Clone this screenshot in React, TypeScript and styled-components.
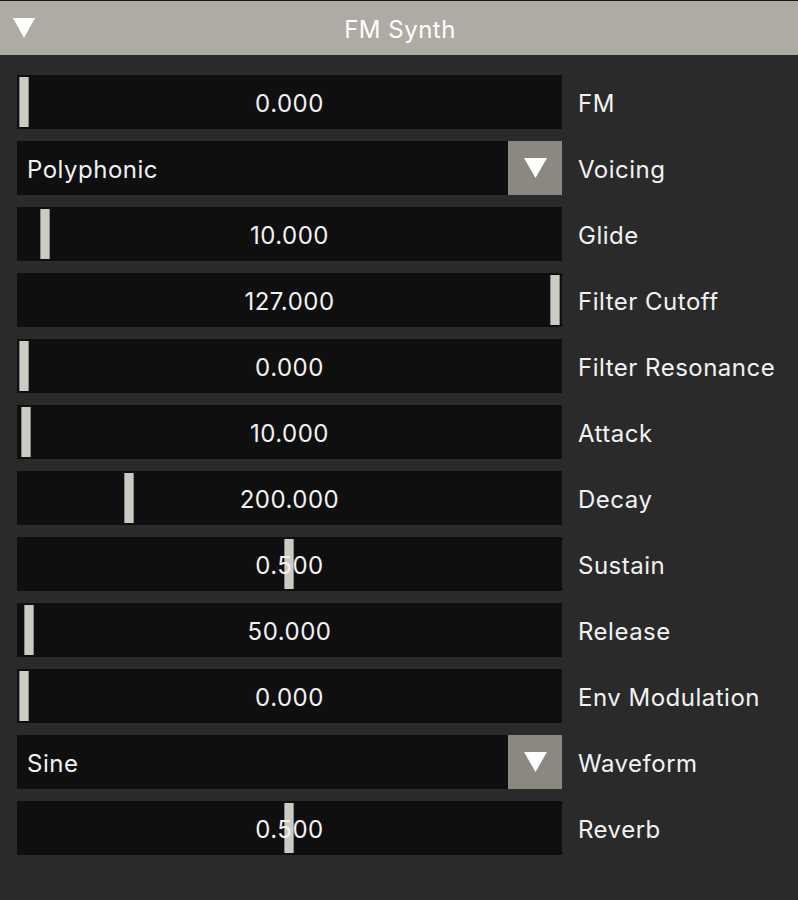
import React from "react";
import styled, { createGlobalStyle } from "styled-components";

const GlobalStyle = createGlobalStyle`
  html, body {
    margin: 0;
    padding: 0;
    background: #2a2a2a;
  }
  body {
    font-family: Inter, "Noto Sans", sans-serif;
    color: #f2f2f2;
  }
`;

type SliderRow = { kind: "slider"; label: string; value: string; pos: number };
type ComboRow = { kind: "combo"; label: string; value: string };
type Row = SliderRow | ComboRow;

// pos = grab offset in px from the left of the track (0..531)
const rows: Row[] = [
  { kind: "slider", label: "FM", value: "0.000", pos: 0 },
  { kind: "combo", label: "Voicing", value: "Polyphonic" },
  { kind: "slider", label: "Glide", value: "10.000", pos: 21 },
  { kind: "slider", label: "Filter Cutoff", value: "127.000", pos: 531 },
  { kind: "slider", label: "Filter Resonance", value: "0.000", pos: 0 },
  { kind: "slider", label: "Attack", value: "10.000", pos: 2 },
  { kind: "slider", label: "Decay", value: "200.000", pos: 105 },
  { kind: "slider", label: "Sustain", value: "0.500", pos: 265 },
  { kind: "slider", label: "Release", value: "50.000", pos: 5 },
  { kind: "slider", label: "Env Modulation", value: "0.000", pos: 0 },
  { kind: "combo", label: "Waveform", value: "Sine" },
  { kind: "slider", label: "Reverb", value: "0.500", pos: 265 },
];

const Window = styled.div`
  width: 798px;
  min-height: 900px;
  background: #2a2a2a;
  border-top: 1px solid #141414;
  box-sizing: border-box;
`;

const Header = styled.div`
  height: 54px;
  background: #aeaba4;
  display: flex;
  align-items: center;
  position: relative;
  justify-content: center;
`;

const HeaderArrow = styled.svg`
  position: absolute;
  left: 13px;
  top: 17px;
`;

const Title = styled.div`
  font-size: 24px;
  letter-spacing: 0.5px;
  color: #ffffff;
  line-height: 1;
  padding-top: 4px;
  padding-left: 2px;
`;

const Body = styled.div`
  padding: 20px 0 0 17px;
  display: flex;
  flex-direction: column;
  gap: 12px;
`;

const Line = styled.div`
  display: flex;
  align-items: center;
  gap: 16px;
`;

const Frame = styled.div`
  width: 545px;
  height: 54px;
  background: #0f0f0f;
  position: relative;
  box-sizing: border-box;
  display: flex;
  align-items: center;
  flex-shrink: 0;
`;

const Text = styled.div`
  font-size: 24px;
  letter-spacing: 0.5px;
  line-height: 1;
  padding-top: 3px;
`;

const SliderText = styled(Text)`
  position: relative;
  width: 100%;
  text-align: center;
  z-index: 1;
`;

const Grab = styled.div`
  position: absolute;
  top: 2px;
  bottom: 2px;
  width: 10px;
  background: #cbcbc3;
  box-shadow: inset 1px 0 0 #8a8a84, inset -1px 0 0 #8a8a84;
`;

const ComboText = styled(Text)`
  flex: 1;
  padding-left: 10px;
`;

const ComboButton = styled.div`
  width: 54px;
  height: 54px;
  background: #8b8882;
  display: flex;
  align-items: center;
  justify-content: center;
`;

const Label = styled(Text)`
  white-space: nowrap;
`;

const Triangle = ({ w, h }: { w: number; h: number }) => (
  <svg width={w} height={h} viewBox={`0 0 ${w} ${h}`}>
    <polygon points={`0,0 ${w},0 ${w / 2},${h}`} fill="#ffffff" />
  </svg>
);

export default function App() {
  return (
    <>
      <GlobalStyle />
      <Window>
        <Header>
          <HeaderArrow width={22} height={20} viewBox="0 0 22 20">
            <polygon points="0,0 22,0 11,20" fill="#ffffff" />
          </HeaderArrow>
          <Title>FM Synth</Title>
        </Header>
        <Body>
          {rows.map((r) => (
            <Line key={r.label}>
              {r.kind === "slider" ? (
                <Frame>
                  <Grab style={{ left: 2 + r.pos }} />
                  <SliderText>{r.value}</SliderText>
                </Frame>
              ) : (
                <Frame>
                  <ComboText>{r.value}</ComboText>
                  <ComboButton>
                    <Triangle w={23} h={20} />
                  </ComboButton>
                </Frame>
              )}
              <Label>{r.label}</Label>
            </Line>
          ))}
        </Body>
      </Window>
    </>
  );
}
